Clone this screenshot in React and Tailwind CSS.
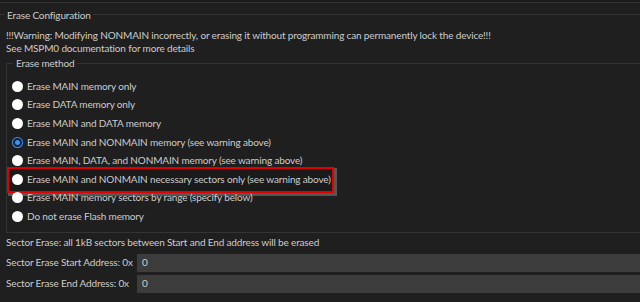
import React from 'react';

const options = [
  { label: 'Erase MAIN memory only' },
  { label: 'Erase DATA memory only' },
  { label: 'Erase MAIN and DATA memory' },
  { label: 'Erase MAIN and NONMAIN memory (see warning above)', checked: true },
  { label: 'Erase MAIN, DATA, and NONMAIN memory (see warning above)' },
  { label: 'Erase MAIN and NONMAIN necessary sectors only (see warning above)', marked: true },
  { label: 'Erase MAIN memory sectors by range (specify below)' },
  { label: 'Do not erase Flash memory' },
];

const Radio = ({ checked }) =>
  checked ? (
    <span className="w-[11px] h-[11px] rounded-full bg-[#3794ff] flex items-center justify-center flex-shrink-0">
      <span className="w-[9px] h-[9px] rounded-full bg-[#1f1f1f] flex items-center justify-center">
        <span className="w-[5px] h-[5px] rounded-full bg-[#3794ff]"></span>
      </span>
    </span>
  ) : (
    <span className="w-[11px] h-[11px] rounded-full bg-white flex-shrink-0"></span>
  );

export default function App() {
  return (
    <div
      className="w-[640px] h-[302px] overflow-hidden bg-[#1f1f1f] text-[#cccccc] text-[10px] tracking-[-0.15px] leading-[13px]"
      style={{ fontFamily: 'Lato, "Open Sans", sans-serif' }}
    >
      {/* top strip */}
      <div className="h-[3px] bg-[#1b1b1b] border-b border-[#343434]"></div>

      {/* Erase Configuration */}
      <fieldset className="w-[700px] mt-[3px] border-t border-[#343434]">
        <legend className="ml-[5px] px-[2px] leading-[15px] pt-[2px]">Erase Configuration</legend>

        <div className="pl-[6px] pt-[6px]">
          <div>!!!Warning: Modifying NONMAIN incorrectly, or erasing it without programming can permanently lock the device!!!</div>
          <div>See MSPM0 documentation for more details</div>
        </div>

        {/* Erase method */}
        <fieldset className="w-[700px] ml-[6px] mt-[1px] border border-[#343434]">
          <legend className="ml-[6px] px-[3px] leading-[15px]">Erase method</legend>
          <div className="pt-[6px] pb-[6px]">
            {options.map((o) => (
              <div key={o.label} className="relative h-[18.6px] flex items-center pl-[5px] gap-[4px]">
                {o.marked && (
                  <span className="absolute left-[0px] top-[-3px] w-[327px] h-[26px] border-2 border-[#e00000] bg-[#1a1a1a] shadow-[2px_2px_0_1px_#555555]"></span>
                )}
                <span className="relative flex items-center gap-[4px]">
                  <Radio checked={o.checked} />
                  <span className="whitespace-nowrap">{o.label}</span>
                </span>
              </div>
            ))}
          </div>
        </fieldset>
      </fieldset>

      {/* Sector erase */}
      <div className="pl-[6px] pt-[3px]">
        <div className="h-[14px] flex items-center">Sector Erase: all 1kB sectors between Start and End address will be erased</div>
        <div className="mt-[4px] flex flex-col gap-[3px]">
          <div className="flex items-center">
            <span className="w-[131px] whitespace-nowrap">Sector Erase Start Address: 0x</span>
            <div className="flex-1 h-[18px] bg-[#3c3c3c] flex items-center pl-[5px]">0</div>
          </div>
          <div className="flex items-center">
            <span className="w-[131px] whitespace-nowrap">Sector Erase End Address: 0x</span>
            <div className="flex-1 h-[18px] bg-[#3c3c3c] flex items-center pl-[5px]">0</div>
          </div>
        </div>
      </div>
    </div>
  );
}
